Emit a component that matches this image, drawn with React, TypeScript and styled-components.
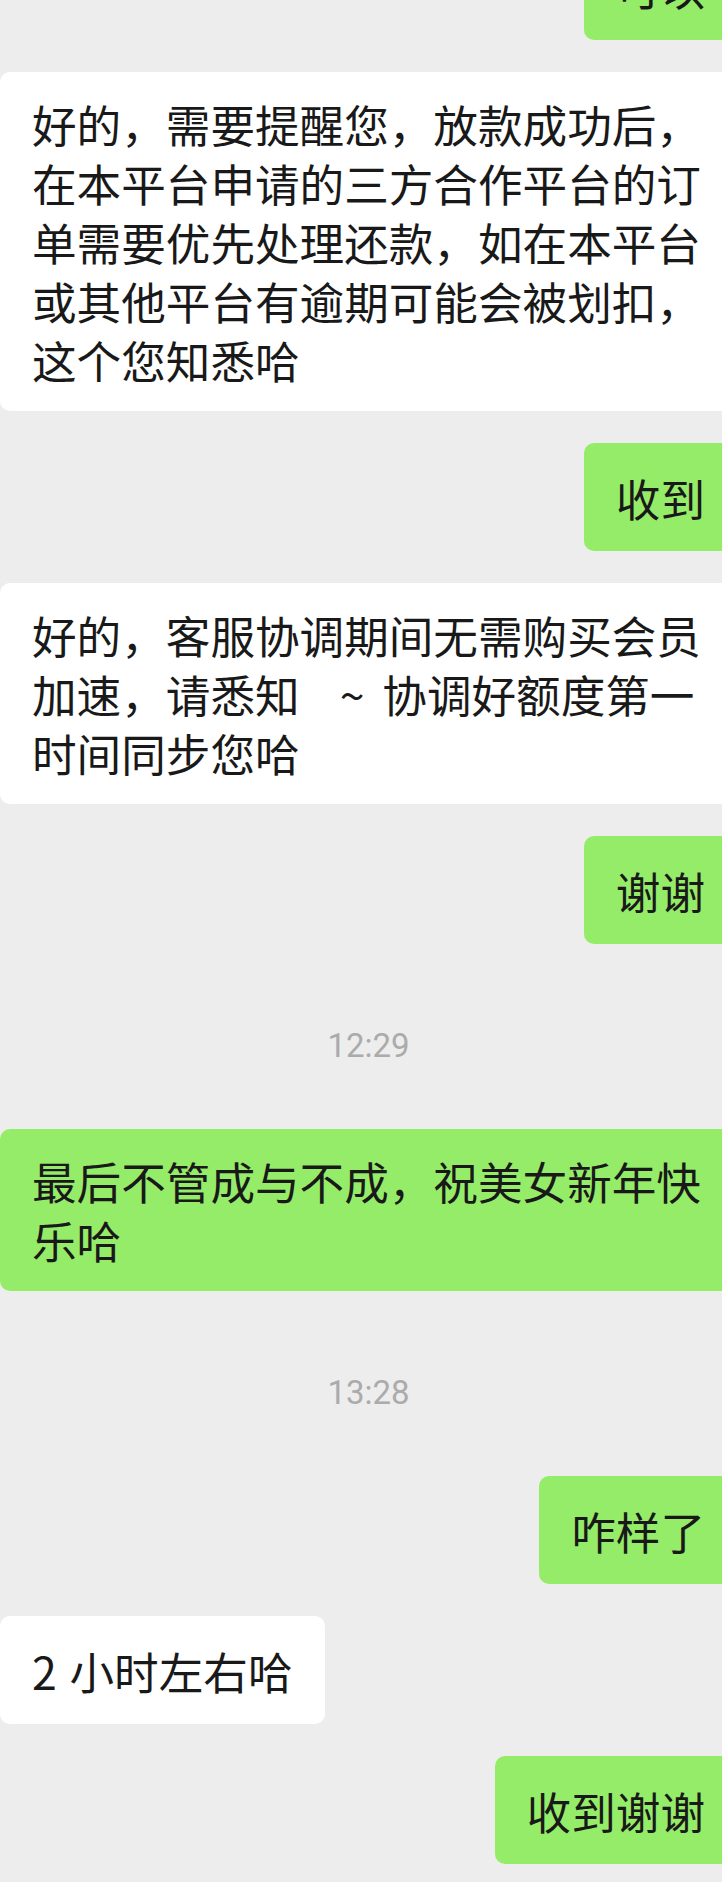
import React from "react";
import styled, { createGlobalStyle } from "styled-components";

const GlobalStyle = createGlobalStyle`
  html, body {
    margin: 0;
    padding: 0;
    background-color: #ededed;
  }
  body {
    font-family: "Noto Sans CJK SC", "Noto Sans", sans-serif;
    color: #191919;
  }
`;

const Viewport = styled.div`
  width: 722px;
  min-height: 1882px;
  overflow: hidden;
  background-color: #ededed;
`;

// the chat column is a little wider than the screen, the right edges of
// the bubbles fall outside the crop like in the original screenshot
const ChatList = styled.div`
  width: 737px;
  margin-top: -68px;
  display: flex;
  flex-direction: column;
  gap: 32px;
  padding-bottom: 20px;
`;

const Bubble = styled.div<{ mine?: boolean }>`
  align-self: ${(props) => (props.mine ? "flex-end" : "flex-start")};
  box-sizing: border-box;
  max-width: 100%;
  min-height: 108px;
  display: flex;
  align-items: center;
  padding: 22px 32px;
  border-radius: 10px;
  background-color: ${(props) => (props.mine ? "#95ec69" : "#ffffff")};
  font-size: 44.6px;
  line-height: 59px;
  color: #191919;
  word-break: break-all;
`;

const TimeStamp = styled.div`
  padding: 50px 0 31px;
  text-align: center;
  font-family: Roboto, "Noto Sans", sans-serif;
  font-size: 33px;
  line-height: 40px;
  color: #ababab;
`;

type Item =
  | { kind: "msg"; mine: boolean; text: string }
  | { kind: "time"; text: string };

const items: Item[] = [
  { kind: "msg", mine: true, text: "可以" },
  {
    kind: "msg",
    mine: false,
    text:
      "好的，需要提醒您，放款成功后，在本平台申请的三方合作平台的订单需要优先处理还款，如在本平台或其他平台有逾期可能会被划扣，这个您知悉哈",
  },
  { kind: "msg", mine: true, text: "收到" },
  {
    kind: "msg",
    mine: false,
    text: "好的，客服协调期间无需购买会员加速，请悉知\u2002\u2009\u2009~\u2009\u2009协调好额度第一时间同步您哈",
  },
  { kind: "msg", mine: true, text: "谢谢" },
  { kind: "time", text: "12:29" },
  { kind: "msg", mine: true, text: "最后不管成与不成，祝美女新年快乐哈" },
  { kind: "time", text: "13:28" },
  { kind: "msg", mine: true, text: "咋样了" },
  { kind: "msg", mine: false, text: "2 \u200A小时左右哈" },
  { kind: "msg", mine: true, text: "收到谢谢" },
];

const App: React.FC = () => {
  return (
    <Viewport>
      <GlobalStyle />
      <ChatList>
        {items.map((item, i) =>
          item.kind === "time" ? (
            <TimeStamp key={i}>{item.text}</TimeStamp>
          ) : (
            <Bubble key={i} mine={item.mine}>
              <span>{item.text}</span>
            </Bubble>
          )
        )}
      </ChatList>
    </Viewport>
  );
};

export default App;
